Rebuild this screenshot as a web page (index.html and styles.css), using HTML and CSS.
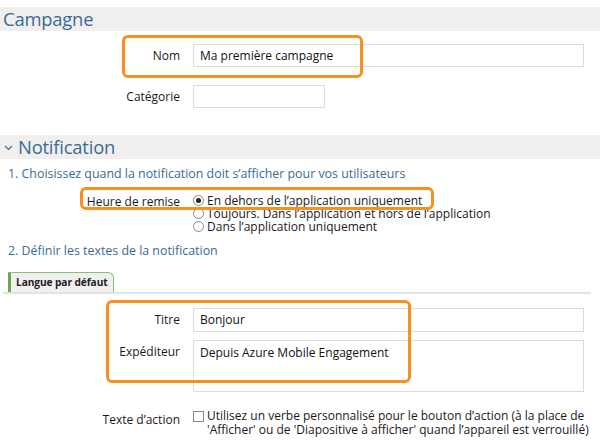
FILE: index.html
```html
<!DOCTYPE html>
<html lang="fr">
<head>
<meta charset="utf-8">
<link rel="stylesheet" href="styles.css">
</head>
<body>
<div class="page">
  <div class="section-head campagne"><span class="section-title">Campagne</span></div>

  <div class="row row-nom">
    <label class="lbl">Nom</label>
    <div class="input wide">Ma première campagne</div>
    <div class="hl hl-nom"></div>
  </div>
  <div class="row row-cat">
    <label class="lbl">Catégorie</label>
    <div class="input narrow"></div>
  </div>

  <div class="section-head notif">
    <svg class="chev" width="9" height="6" viewBox="0 0 9 6"><path d="M1 1 L4.5 4.5 L8 1" fill="none" stroke="#3a6b94" stroke-width="1.2"/></svg>
    <span class="section-title">Notification</span>
  </div>

  <p class="step step1">1. Choisissez quand la notification doit s’afficher pour vos utilisateurs</p>

  <div class="row row-radio">
    <label class="lbl">Heure de remise</label>
    <div class="radios">
      <div class="radio-line"><span class="radio checked"></span>En dehors de l’application uniquement</div>
      <div class="radio-line"><span class="radio"></span>Toujours. Dans l’application et hors de l’application</div>
      <div class="radio-line"><span class="radio"></span>Dans l’application uniquement</div>
    </div>
    <div class="hl hl-radio"></div>
  </div>

  <p class="step step2">2. Définir les textes de la notification</p>

  <div class="tabs">
    <div class="tab">Langue par défaut</div>
  </div>

  <div class="texts">
    <div class="row row-titre">
      <label class="lbl">Titre</label>
      <div class="input wide">Bonjour</div>
    </div>
    <div class="row row-exp">
      <label class="lbl">Expéditeur</label>
      <div class="input wide tall">Depuis Azure Mobile Engagement</div>
    </div>
    <div class="hl hl-texts"></div>
  </div>

  <div class="row row-action">
    <label class="lbl">Texte d’action</label>
    <div class="check-line"><span class="checkbox"></span><span>Utilisez un verbe personnalisé pour le bouton d’action (à la place de 'Afficher' ou de 'Diapositive à afficher' quand l’appareil est verrouillé)</span></div>
  </div>
</div>
</body>
</html>
```
FILE: styles.css
```css
* { box-sizing: border-box; }
html, body { margin: 0; padding: 0; background: #fff; }
body {
  font-family: "Open Sans", "Noto Sans", sans-serif;
  font-size: 12px;
  color: #1a1a1a;
  width: 600px;
  height: 445px;
  overflow: hidden;
}
.page { padding-top: 7px; }

.section-head {
  background: #f0efee;
  height: 24px;
  display: flex;
  align-items: center;
  color: #3a6b94;
}
.section-title { font-size: 18.4px; line-height: 24px; letter-spacing: -0.2px; }
.campagne { padding-left: 3px; }
.notif { margin-top: 27px; padding-left: 4px; }
.chev { margin-right: 5px; margin-top: 2px; }

.row {
  position: relative;
  display: grid;
  grid-template-columns: 180px 1fr;
  column-gap: 13px;
  align-items: center;
}
.lbl { text-align: right; font-size: 12px; }
.input {
  border: 1px solid #dcdcdc;
  height: 23px;
  line-height: 21px;
  padding-left: 6px;
  font-size: 12px;
  color: #111;
}
.wide { width: 391px; }
.narrow { width: 132px; }
.tall { height: 52px; }

.row-nom { margin-top: 13px; }
.row-cat { margin-top: 18px; }

.hl {
  position: absolute;
  border: 3px solid #f7901e;
  border-radius: 6px;
  pointer-events: none;
}
.hl-nom { left: 122px; top: -9px; width: 241px; height: 43px; }

.step {
  margin: 0;
  color: #3a6b94;
  font-size: 12.4px;
  padding-left: 8px;
}
.step1 { margin-top: 6px; line-height: 18px; }
.step2 { margin-top: 9px; line-height: 18px; }

.row-radio { margin-top: 11px; align-items: start; }
.row-radio .lbl { line-height: 13px; margin-top: 1px; }
.radios { line-height: 13px; }
.radio-line { display: flex; align-items: center; height: 13px; }
.radio {
  width: 11px; height: 11px;
  border: 1px solid #8a8a8a;
  border-radius: 50%;
  margin-right: 3px;
  display: inline-flex;
  align-items: center;
  justify-content: center;
  background: #fff;
}
.radio.checked::after {
  content: "";
  width: 5px; height: 5px;
  border-radius: 50%;
  background: #222;
}
.hl-radio { left: 80px; top: -7px; width: 354px; height: 23px; }

.tabs {
  margin-top: 12px;
  margin-left: 3px;
  width: 588px;
  border-bottom: 2px solid #e3e3e3;
  display: flex;
  padding-left: 5px;
}
.tab {
  background: #f0f0f0;
  border-left: 3px solid #6aa84f;
  border-top: 1px solid #8cbf6a;
  border-right: 1px solid #8cbf6a;
  border-top-right-radius: 6px;
  font-weight: bold;
  font-size: 10.2px;
  padding: 2px 5px 2px 5px;
  line-height: 15px;
  color: #222;
  letter-spacing: -0.1px;
}

.texts { position: relative; padding-top: 14px; }
.row-titre .lbl, .row-exp .lbl { align-self: start; line-height: 23px; }
.row-titre .input { height: 24px; line-height: 22px; }
.row-exp { margin-top: 8px; }
.row-exp .input { line-height: 24px; }
.hl-texts { left: 106px; top: 6px; width: 305px; height: 83px; }

.row-action { margin-top: 17px; align-items: start; }
.row-action .lbl { margin-top: 2px; line-height: 17px; }
.check-line { display: flex; line-height: 14px; font-size: 12px; }
.checkbox {
  flex: none;
  width: 11px; height: 11px;
  border: 1px solid #8a8a8a;
  margin-right: 3px;
  margin-top: 2px;
}
```
